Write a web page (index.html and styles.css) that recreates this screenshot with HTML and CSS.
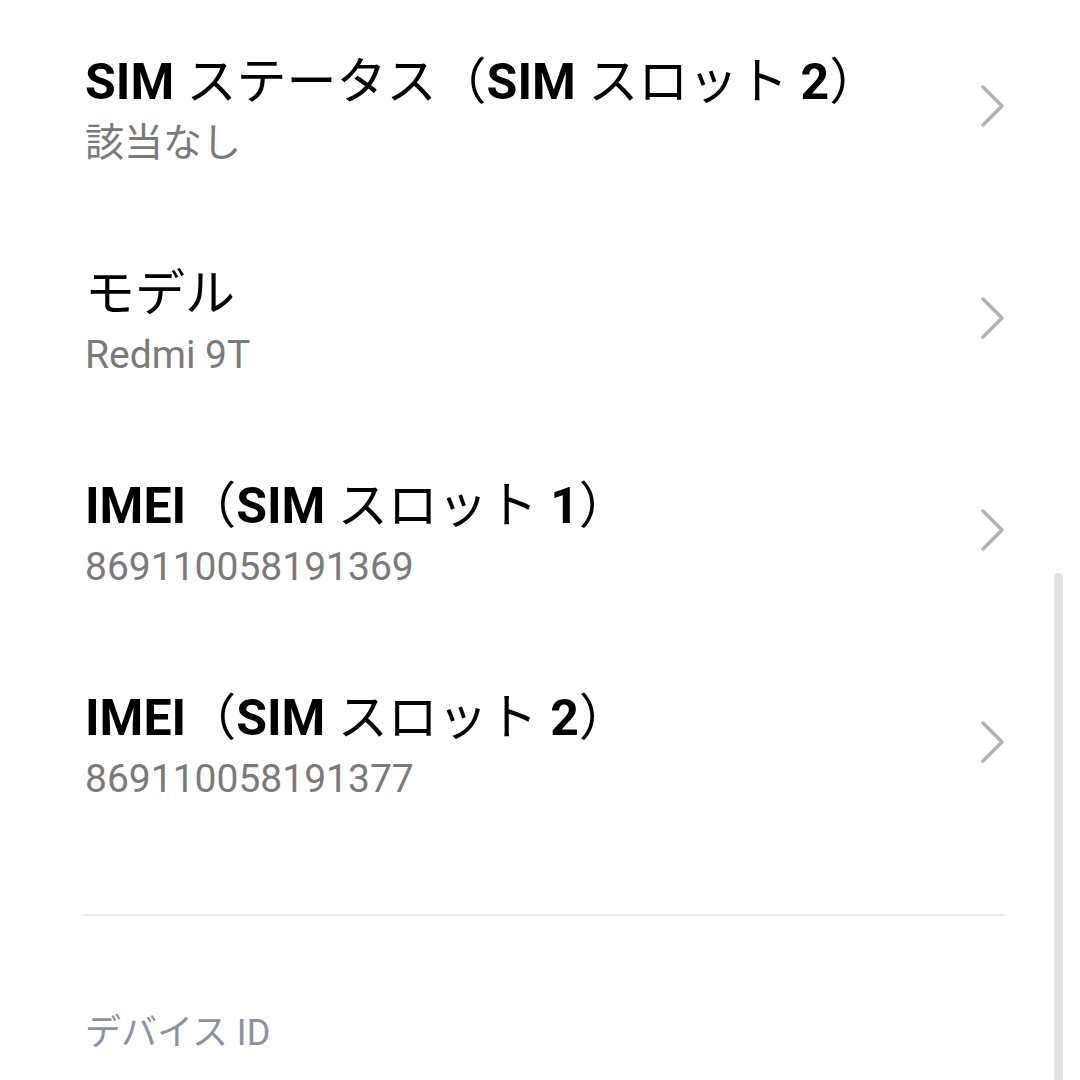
FILE: index.html
```html
<!DOCTYPE html>
<html lang="ja">
<head>
    <meta charset="UTF-8">
    <meta name="viewport" content="width=device-width, initial-scale=1.0">
    <title>デバイス情報</title>
    <link rel="stylesheet" href="styles.css">
</head>
<body>
    <div class="list">
        <div class="row">
            <div class="text">
                <div class="title"><b>SIM</b> ステータス（<b>SIM</b> スロット <b>2</b>）</div>
                <div class="sub">該当なし</div>
            </div>
            <svg class="chevron" width="26" height="42" viewBox="0 0 26 42"><path d="M3 2 L22 21 L3 40" /></svg>
        </div>
        <div class="row">
            <div class="text">
                <div class="title">モデル</div>
                <div class="sub">Redmi 9T</div>
            </div>
            <svg class="chevron" width="26" height="42" viewBox="0 0 26 42"><path d="M3 2 L22 21 L3 40" /></svg>
        </div>
        <div class="row">
            <div class="text">
                <div class="title"><b>IMEI</b>（<b>SIM</b> スロット <b>1</b>）</div>
                <div class="sub">869110058191369</div>
            </div>
            <svg class="chevron" width="26" height="42" viewBox="0 0 26 42"><path d="M3 2 L22 21 L3 40" /></svg>
        </div>
        <div class="row">
            <div class="text">
                <div class="title"><b>IMEI</b>（<b>SIM</b> スロット <b>2</b>）</div>
                <div class="sub">869110058191377</div>
            </div>
            <svg class="chevron" width="26" height="42" viewBox="0 0 26 42"><path d="M3 2 L22 21 L3 40" /></svg>
        </div>
    </div>
    <hr class="divider">
    <h3 class="section">デバイス ID</h3>
    <div class="scrollbar"></div>
</body>
</html>
```

FILE: styles.css
```css
html, body {
    height: 100%;
    margin: 0;
    overflow: hidden;
    background-color: #ffffff;
    font-family: Roboto, "Noto Sans CJK JP", sans-serif;
}
.list {
    display: flex;
    flex-direction: column;
}
.row {
    height: 212px;
    box-sizing: border-box;
    padding: 0 76px 0 85px;
    display: flex;
    align-items: center;
}
.text {
    flex: 1;
    align-self: flex-start;
    padding-top: 53px;
}
.title {
    font-size: 50px;
    line-height: 58px;
    color: #000000;
    white-space: nowrap;
}
.title b {
    font-weight: 700;
}
.sub {
    font-size: 39px;
    line-height: 64px;
    color: #7a7a7a;
}
.chevron {
    margin-right: -2px;
}
.chevron path {
    fill: none;
    stroke: #b3b3b3;
    stroke-width: 3.4;
    stroke-linecap: round;
    stroke-linejoin: round;
}
.divider {
    margin: 66px 76px 0 83px;
    border: none;
    border-top: 2px solid #e8e8e8;
}
.section {
    margin: 92px 0 0 85px;
    font-size: 36px;
    line-height: 50px;
    font-weight: 400;
    color: #8c92a3;
}
.scrollbar {
    position: absolute;
    left: 1054px;
    top: 573px;
    width: 9px;
    height: 520px;
    border-radius: 5px;
    background-color: #e2e2e2;
}
```
